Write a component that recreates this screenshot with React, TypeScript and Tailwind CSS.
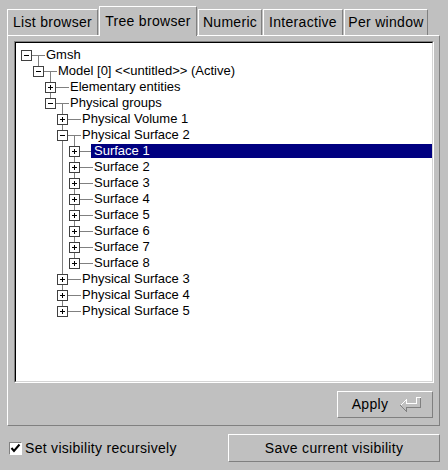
import React from "react";

type Node = { label: string; level: number; open?: boolean; selected?: boolean };

const nodes: Node[] = [
  { label: "Gmsh", level: 0, open: true },
  { label: "Model [0] <<untitled>> (Active)", level: 1, open: true },
  { label: "Elementary entities", level: 2 },
  { label: "Physical groups", level: 2, open: true },
  { label: "Physical Volume 1", level: 3 },
  { label: "Physical Surface 2", level: 3, open: true },
  { label: "Surface 1", level: 4, selected: true },
  { label: "Surface 2", level: 4 },
  { label: "Surface 3", level: 4 },
  { label: "Surface 4", level: 4 },
  { label: "Surface 5", level: 4 },
  { label: "Surface 6", level: 4 },
  { label: "Surface 7", level: 4 },
  { label: "Surface 8", level: 4 },
  { label: "Physical Surface 3", level: 3 },
  { label: "Physical Surface 4", level: 3 },
  { label: "Physical Surface 5", level: 3 },
];

const indent = ["pl-[30px]", "pl-[42px]", "pl-[54px]", "pl-[66px]", "pl-[78px]"];

// y of the row centre inside the tree area
const cy = (i: number) => 12 + 16 * i;

function lastChild(i: number) {
  const lvl = nodes[i].level;
  let last = i;
  for (let j = i + 1; j < nodes.length; j++) {
    if (nodes[j].level <= lvl) break;
    if (nodes[j].level === lvl + 1) last = j;
  }
  return last;
}

function Connectors() {
  return (
    <svg className="absolute inset-0" width="416" height="338" shapeRendering="crispEdges">
      {nodes.map((n, i) => {
        const bx = 5 + 12 * n.level;
        const y = cy(i) + 0.5;
        const last = n.open ? lastChild(i) : i;
        return (
          <g key={i}>
            {n.open && last > i && (
              <line x1={bx + 17.5} y1={y} x2={bx + 17.5} y2={cy(last)} stroke="#808080" />
            )}
            <line x1={bx + 11} y1={y} x2={bx + 24} y2={y} stroke="#808080" />
            <rect x={bx + 0.5} y={cy(i) - 4.5} width="10" height="10" fill="#fff" stroke="#404040" />
            <line x1={bx + 3} y1={y} x2={bx + 8} y2={y} stroke="#000" />
            {!n.open && <line x1={bx + 5.5} y1={cy(i) - 2} x2={bx + 5.5} y2={cy(i) + 3} stroke="#000" />}
          </g>
        );
      })}
    </svg>
  );
}

function Tab({ label, w, active }: { label: string; w: string; active?: boolean }) {
  if (active) {
    return (
      <div
        className={`${w} h-[30px] -mb-px relative z-10 bg-[#c0c0c0] border-t border-l border-white border-r border-r-[#808080] flex items-center justify-center`}
      >
        {label}
      </div>
    );
  }
  return (
    <div
      className={`${w} h-[26px] border-t border-l border-white border-r border-r-[#808080] flex items-center justify-center`}
    >
      {label}
    </div>
  );
}

export default function App() {
  return (
    <div className="w-[448px] h-[470px] bg-[#c0c0c0] text-black text-[14px] tracking-[0.3px] font-['Liberation_Sans',Arial,sans-serif] flex flex-col overflow-hidden">
      {/* onglets */}
      <div className="flex items-end pl-[7px] pt-[6px] h-[35px] gap-px">
        <Tab label="List browser" w="w-[91px]" />
        <Tab label="Tree browser" w="w-[98px]" active />
        <Tab label="Numeric" w="w-[64px]" />
        <Tab label="Interactive" w="w-[80px]" />
        <Tab label="Per window" w="w-[84px]" />
      </div>

      <div className="ml-[7px] w-[433px] h-[391px] border-t border-l border-white border-r border-b border-r-[#808080] border-b-[#808080] flex flex-col">
        <div className="ml-[6px] mt-[5px] w-[420px] h-[342px] border-t border-l border-[#808080] border-r border-b border-r-white border-b-white">
          <div className="w-full h-full bg-white border-t border-l border-black border-r border-b border-r-[#d4d4d4] border-b-[#d4d4d4] relative">
            <Connectors />
            <div className="relative pt-[4px] text-[13px] tracking-normal leading-4">
              {nodes.map((n, i) => (
                <div key={i} className={`h-4 flex ${indent[n.level]}`}>
                  {n.selected ? (
                    <span className="flex-1 h-[14px] mt-px -ml-[3px] pl-[3px] bg-[#000080] text-white leading-[14px]">
                      {n.label}
                    </span>
                  ) : (
                    <span>{n.label}</span>
                  )}
                </div>
              ))}
            </div>
          </div>
        </div>

        <div className="flex justify-end pr-[6px] mt-[8px]">
          <button className="w-[96px] h-[27px] border-t border-l border-white border-r border-b border-r-[#808080] border-b-[#808080] flex items-center justify-center gap-[12px] pl-[4px]">
            <span>Apply</span>
            <svg width="22" height="16" viewBox="0 0 22 16" shapeRendering="crispEdges">
              <polyline points="0.5,8.5 6.5,2.5 6.5,6.5 16.5,6.5 16.5,0.5 20.5,0.5" fill="none" stroke="#fff" />
              <polyline points="20.5,0.5 20.5,10.5 6.5,10.5 6.5,14.5 0.5,8.5" fill="none" stroke="#808080" />
            </svg>
          </button>
        </div>
      </div>

      <div className="flex items-center justify-between mt-[8px] pl-[9px] pr-[8px] h-[28px]">
        <label className="flex items-center gap-[3px]">
          <span className="w-[13px] h-[13px] bg-white border-t border-l border-[#808080] border-r border-b border-r-white border-b-white flex items-center justify-center">
            <svg width="11" height="11" viewBox="0 0 11 11">
              <polyline points="1.5,5 4,8 9.5,1.5" fill="none" stroke="#000" strokeWidth="2" />
            </svg>
          </span>
          <span>Set visibility recursively</span>
        </label>
        <button className="w-[212px] h-[28px] border-t border-l border-white border-r border-b border-r-[#808080] border-b-[#808080]">
          Save current visibility
        </button>
      </div>
    </div>
  );
}
